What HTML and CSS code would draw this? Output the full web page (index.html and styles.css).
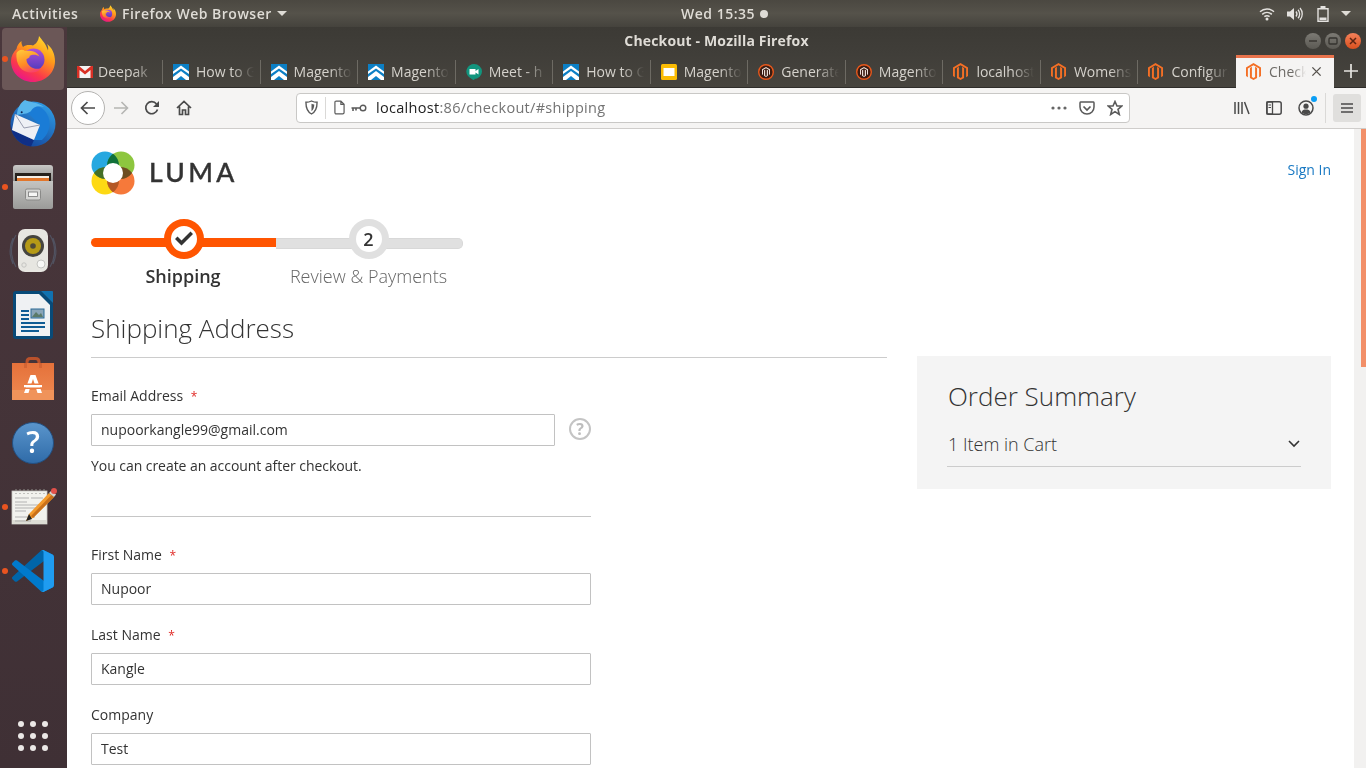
FILE: index.html
```html
<!DOCTYPE html>
<html lang="en">
<head>
<meta charset="utf-8">
<title>Checkout - Mozilla Firefox</title>
<link rel="stylesheet" href="styles.css">
</head>
<body>
<svg class="defs" width="0" height="0" aria-hidden="true">
  <defs>
    <linearGradient id="ffBody" x1="0.85" y1="0" x2="0.3" y2="1">
      <stop offset="0" stop-color="#ffe431"/><stop offset="0.4" stop-color="#ff9a1a"/><stop offset="0.75" stop-color="#fb3a4a"/><stop offset="1" stop-color="#e9148c"/>
    </linearGradient>
    <linearGradient id="ffCore" x1="0.5" y1="0" x2="0.5" y2="1">
      <stop offset="0" stop-color="#b04fd6"/><stop offset="1" stop-color="#4f3bbd"/>
    </linearGradient>
    <linearGradient id="ffSwoosh" x1="0.2" y1="0" x2="0.6" y2="1">
      <stop offset="0" stop-color="#ffc63a"/><stop offset="0.6" stop-color="#ff8a24"/><stop offset="1" stop-color="#f8436a"/>
    </linearGradient>
    <linearGradient id="tbBlue" x1="0.8" y1="0" x2="0.2" y2="1">
      <stop offset="0" stop-color="#2f9ee6"/><stop offset="1" stop-color="#123f96"/>
    </linearGradient>
    <linearGradient id="drawer" x1="0" y1="0" x2="0" y2="1">
      <stop offset="0" stop-color="#c4c4c2"/><stop offset="1" stop-color="#9b9b99"/>
    </linearGradient>
    <linearGradient id="cabinet" x1="0" y1="0" x2="0" y2="1">
      <stop offset="0" stop-color="#c9c9c7"/><stop offset="1" stop-color="#8d8d8b"/>
    </linearGradient>
    <linearGradient id="bag" x1="0" y1="0" x2="0" y2="1">
      <stop offset="0" stop-color="#e5713a"/><stop offset="1" stop-color="#ee8a52"/>
    </linearGradient>
    <linearGradient id="helpBlue" x1="0" y1="0" x2="0" y2="1">
      <stop offset="0" stop-color="#5a95cc"/><stop offset="1" stop-color="#2f6ba8"/>
    </linearGradient>
    <symbol id="firefox" viewBox="0 0 44 46">
      <path fill="url(#ffBody)" d="M28 0C27.500 5 25 8 22 9.500C18 8.500 14.500 9 12 11C10.800 9.200 10.200 7 10.500 5C7.500 7 6 10 5.500 13C2.500 16 0 20 0 25C0 37 10 46 22 46C34 46 44 37 44 25C44 18 41 11.500 36 8C37 10 37.500 12 37 14.500C35 8 31 4 28 0Z"/>
      <circle fill="url(#ffCore)" cx="22.500" cy="23.500" r="11"/>
      <path fill="url(#ffSwoosh)" d="M5.500 17C8 13.500 11.500 13 14 15C18 14.500 25 14.500 28.500 20.500C25 18 21 18.500 18.500 20C19.500 21 17 22.500 15.500 23C15 28 21 34.500 30 32.500C26 38 14 38 9 31.500C6 27.500 5 22 5.500 17Z"/>
    </symbol>
    <symbol id="m-orange" viewBox="0 0 16 18">
      <path fill="#f46f25" d="M8 0L16 4.600V13.800L14 15V5.800L8 2.400L2 5.800V15L0 13.800V4.600Z"/>
      <path fill="#f46f25" d="M4.200 5.200L6.300 4V14.800L8 15.800L9.700 14.800V4L11.800 5.200V16L8 18L4.200 16Z"/>
    </symbol>
    <symbol id="m-dark" viewBox="0 0 16 16">
      <circle cx="8" cy="8" r="7.300" fill="#3b1c12" stroke="#e8581c" stroke-width="1.400"/>
      <path fill="#eadfd8" d="M8 3L12 5.300V10.300L11 10.900V5.900L8 4.200L5 5.900V10.900L4 10.300V5.300Z"/>
      <path fill="#eadfd8" d="M6 6.300L7.200 5.700V11.400L8 11.900L8.800 11.400V5.700L10 6.300V11.800L8 13L6 11.800Z"/>
    </symbol>
    <symbol id="chev" viewBox="0 0 16 16">
      <rect width="16" height="16" fill="#0c7fc5"/>
      <path fill="#fff" d="M0 7.500L8 1.500L16 7.500V10L8 4.500L0 10Z"/>
      <path fill="#fff" d="M0 13L8 7L16 13V16H13L8 12L3 16H0Z"/>
    </symbol>
  </defs>
</svg>

<header class="topbar">
  <div class="topbar-left">
    <span class="activities">Activities</span>
    <span class="appmenu">
      <svg class="appmenu-icon"><use href="#firefox"/></svg>
      <span>Firefox Web Browser</span>
      <i class="caret"></i>
    </span>
  </div>
  <div class="clock"><span>Wed 15:35</span><i class="clock-dot"></i></div>
  <div class="status">
    <svg class="st-wifi" viewBox="0 0 16 14"><path fill="none" stroke="#e4e2df" stroke-width="1.500" d="M1 4.800C5 1.200 11 1.200 15 4.800M3.200 7.300C6 5 10 5 12.800 7.300M5.400 9.700C7 8.500 9 8.500 10.600 9.700"/><circle cx="8" cy="12" r="1.500" fill="#e4e2df"/></svg>
    <svg class="st-vol" viewBox="0 0 16 14"><path fill="#e4e2df" d="M0 4.500H3L7 1V13L3 9.500H0Z"/><path fill="none" stroke="#e4e2df" stroke-width="1.300" d="M9 4.500C10.200 6 10.200 8 9 9.500M11 2.700C13.200 5 13.200 9 11 11.300M13 1C16 4.500 16 9.500 13 13"/></svg>
    <svg class="st-bat" viewBox="0 0 12 16"><path fill="none" stroke="#e4e2df" stroke-width="1.400" d="M1 2.700H11V15.300H1Z"/><rect x="3.500" y="0" width="5" height="2.500" fill="#e4e2df"/><rect x="2.500" y="11.500" width="7" height="2.500" fill="#e4e2df"/></svg>
    <i class="caret"></i>
  </div>
</header>

<div class="desktop">
  <nav class="dock">
    <div class="dock-item active"><i class="run"></i><svg class="ic-firefox"><use href="#firefox"/></svg></div>
    <div class="dock-item">
      <svg class="ic-lg" viewBox="0 0 48 48">
        <circle cx="24" cy="25" r="22.500" fill="url(#tbBlue)"/>
        <path fill="#0f2f86" d="M1.500 25C1.500 36 10 46 22 47.500L25 41L3 31Z"/>
        <path fill="#1a7cd6" d="M14 8C22 4 33 6 38 15C42 22 42 33 33 41L25 41L31 26L20 15Z"/>
        <path fill="#58b6ec" d="M16 1C20 3 28 3 35 8C29 6 24 8 22 12C20 14 16 15 8 16C8 9 12 3 16 1Z"/>
        <circle cx="12.700" cy="13.300" r="1" fill="#0c2050"/>
        <path fill="#eef0f5" d="M6 15L31 26L25 41L3 31Z"/>
        <path fill="none" stroke="#9a9eb0" stroke-width="1" d="M6 15L15 29L31 26"/>
      </svg>
    </div>
    <div class="dock-item"><i class="run"></i>
      <svg class="ic-app" viewBox="0 0 44 44">
        <path fill="url(#cabinet)" d="M2 3C2 1 3 0 5 0H39C41 0 42 1 42 3V17H2Z"/>
        <rect x="4" y="8" width="36" height="10" fill="#26211d"/>
        <rect x="6" y="11" width="32" height="2" fill="#f5efe6"/>
        <rect x="6" y="13" width="32" height="5" fill="#e2762b"/>
        <path fill="url(#drawer)" d="M2 16H42V42C42 43 41 44 40 44H4C3 44 2 43 2 42Z"/>
        <rect x="14.500" y="24" width="15" height="11" rx="1.500" fill="#d6d6d4" stroke="#8a8a88" stroke-width="1"/>
        <rect x="17.500" y="27" width="9" height="4.500" fill="#f7f7f6" stroke="#777" stroke-width="0.800"/>
      </svg>
    </div>
    <div class="dock-item">
      <svg class="ic-lg" viewBox="0 0 48 48">
        <path fill="none" stroke="#5a6a80" stroke-width="1.200" opacity="0.55" d="M7 8C1 18 1 30 7 40M4 11C0 20 0 28 4 37M41 8C47 18 47 30 41 40M44 11C48 20 48 28 44 37"/>
        <rect x="9" y="2" width="30" height="43" rx="7" fill="#e7e6e1"/>
        <circle cx="24" cy="19" r="11" fill="#45443f"/>
        <circle cx="24" cy="19" r="8" fill="#b59a16"/>
        <circle cx="24" cy="19" r="2.800" fill="#4e4a38"/>
        <circle cx="32" cy="37" r="4" fill="#f8f8f6" stroke="#c5c5c2"/>
        <circle cx="15" cy="38" r="2.200" fill="none" stroke="#c5c5c2"/>
      </svg>
    </div>
    <div class="dock-item">
      <svg class="ic-doc" viewBox="0 0 40 48">
        <path fill="#084a78" d="M3 0H28L40 12V45C40 47 39 48 37 48H3C1 48 0 47 0 45V3C0 1 1 0 3 0Z"/>
        <path fill="#eff1f3" d="M3 3H26L37 14V45H3Z"/>
        <path fill="#1172b0" d="M28 0L40 12V1C40 .5 39.500 0 39 0Z"/>
        <rect x="18" y="18" width="13" height="9" fill="#8aa5b8" stroke="#2a6a95" stroke-width="1"/>
        <path fill="#5b7a68" d="M19 26L23 21L26 24L28 22L30 26Z"/>
        <path fill="none" stroke="#0f5c94" stroke-width="2" d="M8 20H16M8 24H16M8 28H16M8 32H32M8 36H32M8 40H26"/>
      </svg>
    </div>
    <div class="dock-item">
      <svg class="ic-app" viewBox="0 0 44 44">
        <path fill="none" stroke="#b9512b" stroke-width="3" d="M16 14V5C16 2.500 17.500 1.500 19.500 1.500H24.500C26.500 1.500 28 2.500 28 5V14"/>
        <path fill="url(#bag)" d="M1 6H43V43H1Z"/>
        <rect x="1" y="33" width="42" height="10" fill="#f0935a"/>
        <path fill="#b9512b" d="M13 6H16V11H13ZM28 6H31V11H28Z" opacity="0.4"/>
        <path fill="#fff" fill-rule="evenodd" d="M19.500 18H24.500L31 36H26.500L25.300 32H18.700L17.500 36H13ZM22 22L20 28H24Z"/>
        <rect x="13" y="28" width="18" height="2.500" fill="#fff"/>
        <rect x="13" y="26.500" width="18" height="1.500" fill="#ec7c42"/>
        <rect x="13" y="30.500" width="18" height="1.500" fill="#ec7c42"/>
      </svg>
    </div>
    <div class="dock-item">
      <svg class="ic-app help-ic" viewBox="0 0 44 44">
        <circle cx="22" cy="22" r="20.500" fill="url(#helpBlue)" stroke="#234f80" stroke-width="1"/>
        <text x="22" y="32" class="help-mark">?</text>
      </svg>
    </div>
    <div class="dock-item"><i class="run"></i>
      <svg class="ic-gedit" viewBox="0 0 46 38">
        <rect x="1" y="4" width="35" height="33" fill="#f2f2ee" stroke="#c9c9c4" stroke-width="0.800"/>
        <rect x="1" y="33" width="35" height="4" fill="#dcdcd4"/>
        <path fill="none" stroke="#8f8f8a" stroke-width="1" stroke-dasharray="2 2" d="M5 2V7M9 2V7M13 2V7M17 2V7M21 2V7M25 2V7M29 2V7M33 2V7" />
        <path fill="none" stroke="#aaa" stroke-width="0.900" d="M4 11H18M20 11H32M4 15H16M4 18H30M4 21H26M4 24H15M4 30H24M4 34H20"/>
        <path fill="#f39a2c" d="M38 6L43 10L22 31L15 34L18 27Z"/>
        <path fill="#c9701a" d="M43 10L40.500 8L20 29L22 31Z"/>
        <path fill="#d5d5d0" d="M38 6L40.500 3.500L45 7.500L43 10Z"/>
        <circle cx="43" cy="4" r="3" fill="#e2514a"/>
        <path fill="#222" d="M18 27L15 34L21 32Z"/>
      </svg>
    </div>
    <div class="dock-item"><i class="run"></i>
      <svg class="ic-vs" viewBox="0 0 100 100">
        <path fill="#0065a9" d="M96.461 10.796L75.857 .876C73.472-.273 70.622.212 68.75 2.083L1.299 63.583C-.516 65.237-.514 68.094 1.303 69.745L6.813 74.754C8.298 76.104 10.535 76.204 12.134 74.991L93.361 13.37C96.086 11.303 100 13.246 100 16.667V16.428C100 14.027 98.625 11.838 96.461 10.796Z"/>
        <path fill="#007acc" d="M96.461 89.204L75.857 99.125C73.472 100.273 70.622 99.788 68.75 97.917L1.299 36.417C-.516 34.763-.514 31.906 1.303 30.255L6.813 25.246C8.298 23.896 10.535 23.796 12.134 25.01L93.361 86.63C96.086 88.697 100 86.754 100 83.333V83.573C100 85.974 98.625 88.162 96.461 89.204Z"/>
        <path fill="#1f9cf0" d="M75.858 99.126C73.472 100.274 70.622 99.789 68.75 97.917C71.056 100.223 75 98.59 75 95.328V4.672C75 1.41 71.056-.223 68.75 2.083C70.622.211 73.472-.274 75.858.874L96.459 10.781C98.623 11.822 100 14.011 100 16.413V83.587C100 85.989 98.623 88.179 96.459 89.22Z"/>
      </svg>
    </div>
    <div class="dock-grid">
      <i></i><i></i><i></i><i></i><i></i><i></i><i></i><i></i><i></i>
    </div>
  </nav>

  <div class="window">
    <div class="titlebar">
      <span></span>
      <span class="title">Checkout - Mozilla Firefox</span>
      <div class="wbtns">
        <span class="wbtn"><svg viewBox="0 0 10 10"><path stroke="#35332f" stroke-width="1.400" d="M1 5H9"/></svg></span>
        <span class="wbtn"><svg viewBox="0 0 10 10"><rect x="1" y="2" width="8" height="6" rx="1" fill="none" stroke="#35332f" stroke-width="1.300"/></svg></span>
        <span class="wbtn close"><svg viewBox="0 0 10 10"><path stroke="#5c2412" stroke-width="1.500" d="M2 2L8 8M8 2L2 8"/></svg></span>
      </div>
    </div>

    <div class="tabstrip">
      <div class="tab first">
        <svg class="fav" viewBox="0 0 16 16"><rect y="2" width="16" height="12" fill="#f4f4f4"/><path fill="#d93025" d="M0 2H2L8 7L14 2H16V14H13.500V6L8 10.500L2.500 6V14H0Z"/></svg>
        <span class="tab-label">Deepak</span>
      </div>
      <div class="tab"><svg class="fav"><use href="#chev"/></svg><span class="tab-label">How to G</span></div>
      <div class="tab"><svg class="fav"><use href="#chev"/></svg><span class="tab-label">Magento</span></div>
      <div class="tab"><svg class="fav"><use href="#chev"/></svg><span class="tab-label">Magento</span></div>
      <div class="tab">
        <svg class="fav" viewBox="0 0 16 16"><path fill="#12957e" d="M8 0A8 7.500 0 0 1 8 15C8.500 15 9 16 8 16C7 16 4 14 2 12A8 7.500 0 0 1 8 0Z"/><path fill="#fff" d="M3.500 5H9.500V7L12.500 5V10.500L9.500 8.500V10.500H3.500Z"/></svg>
        <span class="tab-label">Meet - h</span>
      </div>
      <div class="tab"><svg class="fav"><use href="#chev"/></svg><span class="tab-label">How to G</span></div>
      <div class="tab">
        <svg class="fav" viewBox="0 0 16 16"><rect width="16" height="16" rx="1.500" fill="#fbbc04"/><rect x="2.500" y="4" width="11" height="8" fill="#fff"/></svg>
        <span class="tab-label">Magento</span>
      </div>
      <div class="tab"><svg class="fav"><use href="#m-dark"/></svg><span class="tab-label">Generate</span></div>
      <div class="tab"><svg class="fav"><use href="#m-dark"/></svg><span class="tab-label">Magento</span></div>
      <div class="tab"><svg class="fav tall"><use href="#m-orange"/></svg><span class="tab-label">localhost</span></div>
      <div class="tab"><svg class="fav tall"><use href="#m-orange"/></svg><span class="tab-label">Womens</span></div>
      <div class="tab last"><svg class="fav tall"><use href="#m-orange"/></svg><span class="tab-label">Configure</span></div>
      <div class="tab active">
        <svg class="fav tall"><use href="#m-orange"/></svg>
        <span class="tab-label short">Check</span>
        <svg class="tab-x" viewBox="0 0 12 12"><path stroke="#57534e" stroke-width="1.500" d="M1.500 1.500L10.500 10.500M10.500 1.500L1.500 10.500"/></svg>
      </div>
      <svg class="newtab" viewBox="0 0 14 14"><path stroke="#e6e4e0" stroke-width="1.700" d="M7 0V14M0 7H14"/></svg>
    </div>

    <div class="navbar">
      <span class="back"><svg viewBox="0 0 16 16"><path fill="none" stroke="#4a4a4a" stroke-width="1.700" d="M15 8H1.500M7.500 2L1.500 8L7.500 14"/></svg></span>
      <svg class="nav-ic fwd" viewBox="0 0 16 16"><path fill="none" stroke="#b5b5b3" stroke-width="1.600" d="M1 8H14.500M8.500 2L14.500 8L8.500 14"/></svg>
      <svg class="nav-ic reload" viewBox="0 0 16 16"><path fill="none" stroke="#4a4a4a" stroke-width="1.700" d="M13.500 9.500A6 6 0 1 1 12.500 4"/><path fill="#4a4a4a" d="M15 1V7H9Z"/></svg>
      <svg class="nav-ic home" viewBox="0 0 16 16"><path fill="none" stroke="#4a4a4a" stroke-width="1.700" d="M1 8L8 1.500L15 8M3.500 6.500V14.500H6.500V10H9.500V14.500H12.500V6.500"/></svg>
      <div class="urlbar">
        <svg class="u-shield" viewBox="0 0 14 16"><path fill="none" stroke="#5a5a5a" stroke-width="1.500" d="M7 1C9 2 11 2.400 13 2.400C13 9 11 13 7 15C3 13 1 9 1 2.400C3 2.400 5 2 7 1Z"/><path fill="#5a5a5a" d="M7 4C8 4.500 9 4.800 10 4.800C10 8 9 10.500 7 12Z"/></svg>
        <i class="u-sep"></i>
        <svg class="u-page" viewBox="0 0 12 16"><path fill="none" stroke="#5a5a5a" stroke-width="1.300" d="M1 2.500C1 1.500 1.500 1 2.500 1H7.500L11 4.500V13.500C11 14.500 10.500 15 9.500 15H2.500C1.500 15 1 14.500 1 13.500ZM7.500 1V4.500H11"/></svg>
        <svg class="u-key" viewBox="0 0 16 8"><circle cx="12" cy="4" r="2.800" fill="none" stroke="#5a5a5a" stroke-width="1.400"/><path stroke="#5a5a5a" stroke-width="1.600" fill="none" d="M9 4H0.500M2 4V7M5 4V6.500"/></svg>
        <span class="u-text"><b>localhost</b>:86/checkout/#shipping</span>
        <svg class="u-dots" viewBox="0 0 16 4"><circle cx="2" cy="2" r="1.600"/><circle cx="8" cy="2" r="1.600"/><circle cx="14" cy="2" r="1.600"/></svg>
        <svg class="u-pocket" viewBox="0 0 16 14"><path fill="none" stroke="#5a5a5a" stroke-width="1.500" d="M1.500 1H14.500C15 1 15 1.500 15 2V6C15 10 12 13 8 13C4 13 1 10 1 6V2C1 1.500 1 1 1.500 1Z"/><path fill="none" stroke="#5a5a5a" stroke-width="1.700" d="M4.500 5.500L8 9L11.500 5.500"/></svg>
        <svg class="u-star" viewBox="0 0 16 16"><path fill="none" stroke="#5a5a5a" stroke-width="1.600" d="M8 1.500L10 6H14.800L11 9.300L12.300 14.500L8 11.700L3.700 14.500L5 9.300L1.200 6H6Z"/></svg>
      </div>
      <div class="tools">
        <svg class="nav-ic lib" viewBox="0 0 16 14"><path fill="none" stroke="#4a4a4a" stroke-width="1.500" d="M1 1V13M4.500 1V13M8 1V13M10.500 1L15 13"/></svg>
        <svg class="nav-ic side" viewBox="0 0 16 14"><rect x="0.800" y="0.800" width="14.400" height="12.400" rx="2" fill="none" stroke="#4a4a4a" stroke-width="1.500"/><rect x="1" y="1" width="5.500" height="12" fill="none" stroke="#4a4a4a" stroke-width="1.300"/><path stroke="#4a4a4a" d="M2.500 4H5M2.500 6.500H5"/></svg>
        <span class="acct">
          <svg viewBox="0 0 16 16"><circle cx="8" cy="8" r="7" fill="none" stroke="#4a4a4a" stroke-width="1.500"/><circle cx="8" cy="6.200" r="2.600" fill="#4a4a4a"/><path fill="#4a4a4a" d="M3.500 12.500C4 10 6 9.500 8 9.500C10 9.500 12 10 12.500 12.500C10 14.500 6 14.500 3.500 12.500Z"/></svg>
          <i class="acct-dot"></i>
        </span>
        <i class="t-sep"></i>
        <span class="menu-btn"><svg viewBox="0 0 12 10"><path stroke="#4a4a4a" stroke-width="1.400" d="M0 1H12M0 5H12M0 9H12"/></svg></span>
      </div>
    </div>

    <div class="viewport">
      <main class="page">
        <div class="page-head">
          <a class="logo">
            <svg class="logo-mark" viewBox="0 0 44 44">
              <g class="logo-blend">
                <circle class="mult" cx="14" cy="14" r="13.500" fill="#27a8e0"/>
                <circle class="mult" cx="30" cy="14" r="13.500" fill="#8dc63f"/>
                <circle class="mult" cx="14" cy="30" r="13.500" fill="#fdd914"/>
                <circle class="mult" cx="30" cy="30" r="13.500" fill="#f6793a"/>
              </g>
              <path class="logo-petals" d="M22 2.500C26 6 28 10 28 14H16C16 10 18 6 22 2.500Z" fill="#0f6d3a"/>
              <path class="logo-petals" d="M3 22C6 18 10 16 14 16V28C10 28 6 26 3 22Z" fill="#4a6a2c"/>
              <path class="logo-petals" d="M41 22C38 18 34 16 30 16V28C34 28 38 26 41 22Z" fill="#6a4a24"/>
              <path class="logo-petals" d="M22 41.500C26 38 28 34 28 30H16C16 34 18 38 22 41.500Z" fill="#a8552a"/>
              <circle cx="22" cy="22" r="10" fill="#fff"/>
            </svg>
            <span class="logo-word">LUMA</span>
          </a>
          <a class="signin">Sign In</a>
        </div>

        <ul class="steps">
          <li class="step done">
            <span class="badge"><svg viewBox="0 0 18 16"><path fill="#333" d="M0 8L2.500 5.500L6.500 9.500L15.500 .5L18 3L6.500 14.500Z"/></svg></span>
            <span class="step-name">Shipping</span>
          </li>
          <li class="step">
            <span class="badge">2</span>
            <span class="step-name">Review &amp; Payments</span>
          </li>
        </ul>

        <div class="columns">
          <section class="shipping">
            <h2 class="section-title">Shipping Address</h2>
            <div class="email-block">
              <label class="label">Email Address <em>*</em></label>
              <div class="with-help">
                <input class="input email" value="nupoorkangle99@gmail.com">
                <span class="help">?</span>
              </div>
              <p class="note">You can create an account after checkout.</p>
            </div>
            <div class="address">
              <label class="label">First Name <em>*</em></label>
              <input class="input" value="Nupoor">
              <label class="label">Last Name <em>*</em></label>
              <input class="input" value="Kangle">
              <label class="label">Company</label>
              <input class="input" value="Test">
            </div>
          </section>
          <aside class="summary">
            <h3 class="summary-title">Order Summary</h3>
            <div class="summary-row">
              <span>1 Item in Cart</span>
              <svg class="summary-chev" viewBox="0 0 12 8"><path fill="none" stroke="#333" stroke-width="1.600" d="M1 1L6 6L11 1"/></svg>
            </div>
          </aside>
        </div>
      </main>
      <div class="scrollbar"><i class="thumb"></i></div>
    </div>
  </div>
</div>
</body>
</html>
```
FILE: styles.css
```css
* { box-sizing: border-box; }
html, body { margin: 0; padding: 0; }
body {
  width: 1366px;
  height: 768px;
  overflow: hidden;
  font-family: "Open Sans", sans-serif;
  background: #fff;
  color: #333;
}
.defs { position: absolute; }
svg { display: block; flex: none; }
i { display: block; flex: none; }

/* top bar */
.topbar {
  height: 27px;
  display: flex;
  align-items: center;
  background: linear-gradient(#4b4841, #55524a 50%, #45433d);
  color: #dfdcd6;
  font-size: 14px;
  font-weight: 600;
  letter-spacing: 0.5px;
}
.topbar-left { width: 681px; display: flex; align-items: center; padding-left: 12px; }
.activities { width: 88px; }
.appmenu { display: flex; align-items: center; }
.appmenu-icon { width: 16px; height: 17px; margin-right: 6px; }
.caret {
  width: 0; height: 0;
  border-left: 5px solid transparent;
  border-right: 5px solid transparent;
  border-top: 5px solid #dfdcd6;
}
.appmenu .caret { margin-left: 5px; }
.clock { display: flex; align-items: center; }
.clock-dot { width: 8px; height: 8px; border-radius: 50%; background: #dfdcd6; margin-left: 5px; }
.status { margin-left: auto; padding-right: 15px; display: flex; align-items: center; }
.st-wifi { width: 16px; height: 14px; margin-right: 12px; }
.st-vol { width: 16px; height: 14px; margin-right: 14px; }
.st-bat { width: 12px; height: 16px; margin-right: 12px; }

.desktop { display: flex; height: 741px; }

/* dock */
.dock {
  width: 67px;
  display: flex;
  flex-direction: column;
  background: linear-gradient(#4a373c, #3f3035);
}
.dock-item {
  position: relative;
  width: 66px;
  height: 64px;
  display: flex;
  align-items: center;
  justify-content: center;
  flex: none;
}
.dock-item.active::before {
  content: "";
  position: absolute;
  left: 2px; top: 1px;
  width: 62px; height: 62px;
  border-radius: 4px;
  background: #6b5757;
}
.run {
  position: absolute;
  left: 2px; top: 29px;
  width: 6px; height: 6px;
  border-radius: 50%;
  background: #e95420;
  z-index: 1;
}
.ic-firefox { width: 44px; height: 46px; position: relative; }
.ic-app { width: 44px; height: 44px; }
.ic-lg { width: 48px; height: 48px; }
.ic-doc { width: 40px; height: 48px; }
.ic-gedit { width: 46px; height: 38px; margin-left: 2px; margin-bottom: 2px; }
.ic-vs { width: 42px; height: 42px; }
.help-ic { overflow: visible; }
.help-mark { font: 600 30px "Open Sans", sans-serif; fill: #fff; text-anchor: middle; }
.dock-grid {
  margin: auto 0 17px 18px;
  display: grid;
  grid-template-columns: repeat(3, 6px);
  grid-auto-rows: 6px;
  gap: 6px;
  width: 30px;
}
.dock-grid i { width: 6px; height: 6px; border-radius: 50%; background: #ebe8e6; }

/* window */
.window { flex: 1; min-width: 0; display: flex; flex-direction: column; }
.titlebar {
  height: 27px;
  display: grid;
  grid-template-columns: 1fr auto 1fr;
  align-items: center;
  background: linear-gradient(#3c3a35, #403e39);
  color: #dfdcd6;
  font-size: 14px;
  font-weight: 700;
  letter-spacing: 0.15px;
}
.wbtns { display: flex; justify-content: flex-end; gap: 4px; padding-right: 5px; padding-top: 1px; }
.wbtn {
  width: 16px; height: 16px; border-radius: 50%;
  background: linear-gradient(#7c7a74, #5b5953);
  display: flex; align-items: center; justify-content: center;
}
.wbtn svg { width: 10px; height: 10px; }
.wbtn.close { background: linear-gradient(#f4815a, #d9501e); }

.tabstrip {
  height: 34px;
  display: flex;
  align-items: stretch;
  background: linear-gradient(#403e39, #47443e);
  border-bottom: 1px solid #2f2d2a;
  font-size: 14px;
  color: #d5d2cc;
}
.tab {
  position: relative;
  width: 97.55px;
  flex: none;
  display: flex;
  align-items: center;
  padding-left: 10px;
  padding-top: 2px;
}
.tab.first { width: 96px; }
.tab.first .fav { margin-right: 5px; }
.tab::after {
  content: "";
  position: absolute;
  right: 0; top: 6px;
  width: 1px; height: 24px;
  background: #6d6a63;
}
.tab.last::after, .tab.active::after { display: none; }
.fav { width: 16px; height: 16px; margin-right: 7px; }
.fav.tall { width: 15px; height: 17px; margin-right: 8px; }
.tab-label {
  width: 58px;
  white-space: nowrap;
  overflow: hidden;
  -webkit-mask-image: linear-gradient(90deg, #000 62%, transparent);
  mask-image: linear-gradient(90deg, #000 62%, transparent);
}
.tab.active {
  background: #f5f4f3;
  color: #6d6a66;
  border-top: 3px solid #e9734c;
  margin-top: 1px;
  margin-bottom: -1px;
  padding-top: 0;
  padding-bottom: 3px;
}
.tab-label.short { width: 37px; }
.tab-x { width: 11px; height: 11px; margin-left: 5px; }
.newtab { width: 14px; height: 14px; margin-left: 10px; align-self: center; }

/* nav bar */
.navbar {
  height: 41px;
  display: flex;
  align-items: center;
  background: #f5f4f3;
  border-bottom: 1px solid #cfcdcb;
  padding-bottom: 1px;
}
.back {
  width: 34px; height: 34px;
  margin-left: 4px;
  border-radius: 50%;
  background: #fff;
  border: 1px solid #b4b3b1;
  display: flex; align-items: center; justify-content: center;
}
.back svg { width: 16px; height: 16px; }
.nav-ic { width: 16px; height: 16px; }
.fwd { margin-left: 8px; }
.reload { margin-left: 15px; }
.home { margin-left: 16px; }
.urlbar {
  width: 834px;
  height: 30px;
  margin-left: 104px;
  background: #fff;
  border: 1px solid #c9c8c6;
  border-radius: 4px;
  display: flex;
  align-items: center;
  font-size: 14.5px;
  color: #737373;
  padding-left: 8px;
}
.u-shield { width: 13px; height: 15px; }
.u-sep { width: 1px; height: 22px; background: #dad9d7; margin-left: 7px; }
.u-page { width: 11px; height: 15px; margin-left: 8px; }
.u-key { width: 16px; height: 8px; margin-left: 6px; }
.u-text { margin-left: 9px; flex: 1; letter-spacing: 0.3px; }
.u-text b { font-weight: 400; color: #222; }
.u-dots { width: 16px; height: 4px; fill: #666; }
.u-pocket { width: 16px; height: 14px; margin-left: 12px; }
.u-star { width: 16px; height: 16px; margin-left: 12px; margin-right: 6px; }
.tools { display: flex; align-items: center; margin-left: 104px; }
.lib { height: 14px; }
.side { height: 14px; margin-left: 16px; }
.acct { position: relative; margin-left: 16px; width: 16px; height: 16px; }
.acct svg { width: 16px; height: 16px; }
.acct-dot {
  position: absolute;
  right: -3px; top: -4px;
  width: 6px; height: 6px;
  border-radius: 50%;
  background: #0a9ef5;
}
.t-sep { width: 1px; height: 30px; background: #dad9d7; margin-left: 11px; }
.menu-btn {
  width: 28px; height: 28px;
  margin-left: 7px;
  border-radius: 3px;
  background: #e0dfdd;
  display: flex; align-items: center; justify-content: center;
}
.menu-btn svg { width: 12px; height: 10px; }

/* page */
.viewport { flex: 1; min-height: 0; display: flex; background: #fff; }
.page { flex: 1; min-width: 0; overflow: hidden; padding: 0 23px 0 24px; font-size: 14px; color: #333; }
.scrollbar { width: 12px; background: #f2f1f0; display: flex; justify-content: flex-end; }
.thumb { width: 5px; height: 238px; background: #f28f68; }

.page-head { display: flex; justify-content: space-between; align-items: flex-start; padding-top: 22px; height: 90px; }
.logo { display: flex; align-items: center; }
.logo-mark { width: 44px; height: 44px; }
.logo-blend { isolation: isolate; }
.mult { mix-blend-mode: multiply; }
.logo-petals { opacity: 0.85; }
.logo-word {
  font-family: "Lato", sans-serif;
  font-size: 26.5px;
  font-weight: 500;
  letter-spacing: 3.3px;
  -webkit-text-stroke: 0.4px #333;
  color: #333;
  margin: -2px 0 0 14px;
  line-height: 40px;
}
.signin { color: #1979c3; font-size: 14px; line-height: 20px; margin-top: 9px; }

.steps { list-style: none; margin: 0; padding: 0; display: flex; width: 372px; }
.step {
  position: relative;
  width: 187px;
  padding-right: 2px;
  display: flex;
  flex-direction: column;
  align-items: center;
  height: 91px;
  font-size: 18px;
  font-weight: 300;
  color: #666;
}
.step.done { width: 185px; padding-right: 0; }
.step::before {
  content: "";
  position: absolute;
  left: 0; right: 0; top: 19px;
  height: 9px;
  background: #e0e0e0;
  border: 1px solid #d8d8d8;
  border-left: 0;
  border-radius: 0 5px 5px 0;
}
.step.done::before { background: #ff5501; border: 0; border-radius: 5px 0 0 5px; }
.badge {
  position: relative;
  width: 40px; height: 40px;
  border-radius: 50%;
  background: #fff;
  border: 7px solid #e0e0e0;
  display: flex; align-items: center; justify-content: center;
  font-size: 18px;
  font-weight: 600;
  color: #333;
}
.step.done .badge { border-color: #ff5501; }
.badge svg { width: 18px; height: 16px; }
.step-name { margin-top: 5px; line-height: 25px; }
.step.done .step-name { color: #333; font-weight: 600; margin-right: 1px; }

.columns { display: flex; gap: 30px; }
.shipping { width: 796px; flex: none; }
.section-title {
  margin: 0;
  font-size: 26px;
  font-weight: 300;
  line-height: 36px;
  height: 48px;
  border-bottom: 1px solid #ccc;
}
.label { display: block; font-size: 14px; line-height: 20px; color: #333; }
.label em { font-style: normal; color: #e02b27; font-size: 12px; margin-left: 4px; line-height: 1; }
.email-block { padding-top: 28px; width: 500px; height: 159px; border-bottom: 1px solid #c6c6c6; }
.with-help { display: flex; align-items: center; margin-top: 8px; }
.input {
  display: block;
  width: 500px;
  height: 32px;
  padding: 0 9px 2px;
  border: 1px solid #c2c2c2;
  border-radius: 1px;
  background: #fff;
  font: 14px "Open Sans", sans-serif;
  color: #333;
  outline: 0;
}
.input.email { width: 464px; }
.help {
  width: 22px; height: 22px;
  margin-left: 14px;
  margin-top: -3px;
  border: 2px solid #c4c4c4;
  border-radius: 50%;
  color: #bdbdbd;
  font-size: 16px;
  font-weight: 700;
  line-height: 18px;
  text-align: center;
}
.note { margin: 10px 0 0; line-height: 20px; letter-spacing: -0.05px; }
.address { padding-top: 28px; width: 500px; }
.address .label { margin-bottom: 8px; }
.address .input { margin-bottom: 20px; }

.summary {
  width: 414px;
  height: 133px;
  margin-top: 46px;
  background: #f4f4f4;
  padding: 22px 30px 0 31px;
}
.summary-title { margin: 0; font-size: 26px; font-weight: 300; line-height: 36px; color: #333; }
.summary-row {
  display: flex;
  justify-content: space-between;
  align-items: center;
  margin-top: 16px;
  height: 37px;
  margin-left: -1px;
  padding-left: 1px;
  padding-right: 1px;
  border-bottom: 1px solid #ccc;
  font-size: 18px;
  font-weight: 300;
  padding-bottom: 9px;
}
.summary-chev { width: 12px; height: 8px; margin-top: 1px; }
```
